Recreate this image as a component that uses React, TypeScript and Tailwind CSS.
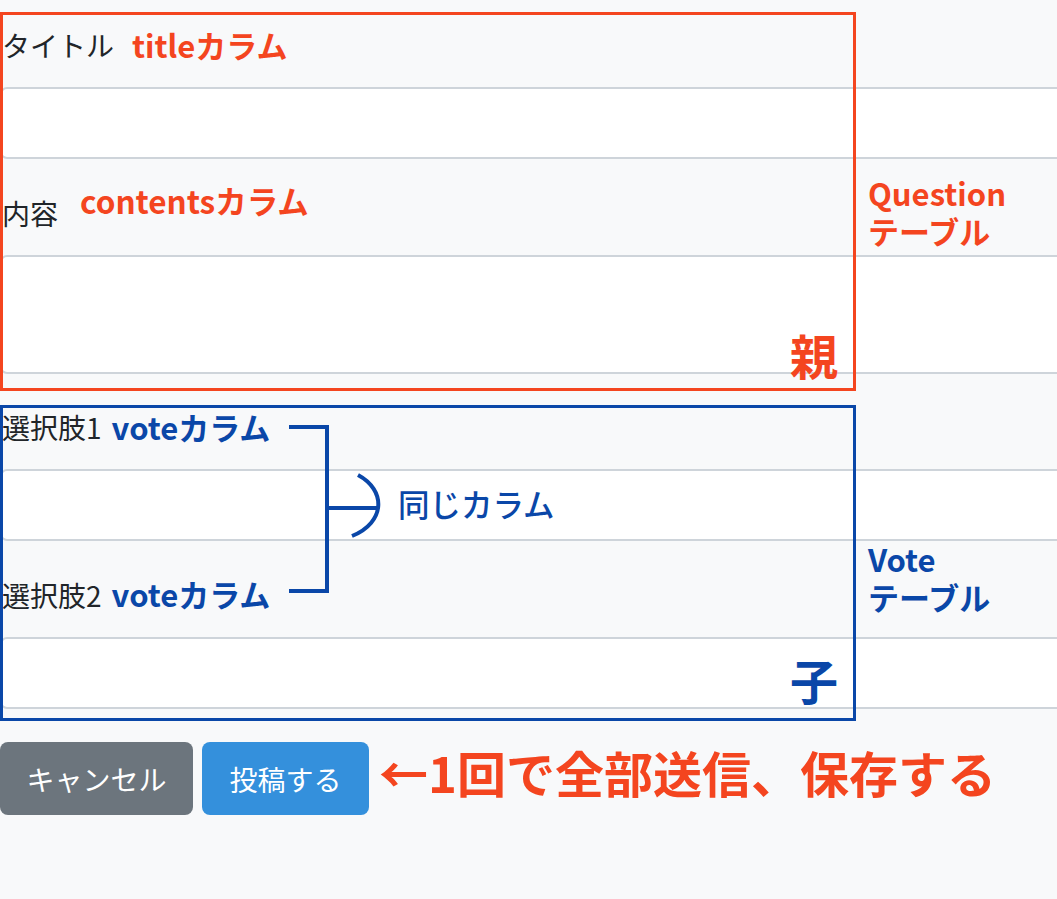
import React from "react";

const RED = "#f4451f";
const BLUE = "#0a47a8";

function Group({
  label,
  note,
  children,
}: {
  label: string;
  note: React.ReactNode;
  children: React.ReactNode;
}) {
  return (
    <div className="mb-[33.5px]">
      <div className="ml-[2px] mb-[22px] flex h-[40px] items-center text-[28px] text-[#212529]">
        <span className="leading-[40px]">{label}</span>
        {note}
      </div>
      {children}
    </div>
  );
}

const inputCls =
  "block h-[72px] w-[1100px] rounded-[7px] border-2 border-[#ced4da] bg-white outline-none";

export default function App() {
  const font = { fontFamily: '"Noto Sans CJK JP", "Noto Sans", sans-serif' };
  return (
    <div
      className="relative w-[1057px] h-[899px] overflow-hidden bg-[#f8f9fa] pt-[25px]"
      style={font}
    >
      <form className="w-[1057px]" onSubmit={(e) => e.preventDefault()}>
        <Group
          label="タイトル"
          note={
            <span className="ml-[18px] mb-[2px] text-[31px] font-bold leading-none text-[#f4451f]">titleカラム</span>
          }
        >
          <input type="text" className={inputCls} />
        </Group>
        <Group
          label="内容"
          note={
            <span className="ml-[22px] mb-[24px] text-[31.5px] font-bold leading-none text-[#f4451f]">contentsカラム</span>
          }
        >
          <textarea className="block h-[119px] w-[1100px] resize-none rounded-[7px] border-2 border-[#ced4da] bg-white outline-none" />
        </Group>
        <Group
          label="選択肢1"
          note={
            <span className="ml-[10px] mb-[2px] text-[31px] font-bold leading-none text-[#0a47a8]">voteカラム</span>
          }
        >
          <input type="text" className={inputCls} />
        </Group>
        <Group
          label="選択肢2"
          note={
            <span className="ml-[10px] mb-[2px] text-[31px] font-bold leading-none text-[#0a47a8]">voteカラム</span>
          }
        >
          <input type="text" className={inputCls} />
        </Group>
        <div className="flex items-center gap-[9px]">
          <button
            type="button"
            className="h-[73px] w-[193px] rounded-[8px] bg-[#6c757d] text-[28px] text-white"
          >
            キャンセル
          </button>
          <button
            type="submit"
            className="h-[73px] w-[167px] rounded-[8px] bg-[#3490dc] text-[28px] text-white"
          >
            投稿する
          </button>
          <span
            className="ml-[1px] mb-[14px] whitespace-nowrap text-[49px] font-bold leading-none"
            style={{ color: RED }}
          >
            ←1回で全部送信、保存する
          </span>
        </div>
      </form>

      {/* annotation overlays */}
      <div className="pointer-events-none absolute left-0 top-[12px] h-[379px] w-[856px] border-[3.5px] border-[#f4451f]" />
      <div className="pointer-events-none absolute left-0 top-[405px] h-[316px] w-[856px] border-[3.5px] border-[#0a47a8]" />

      <div className="absolute left-[868px] top-[174px] flex flex-col text-[31px] font-bold leading-[38px] text-[#f4451f]">
        <span>Question</span>
        <span>テーブル</span>
      </div>
      <div className="absolute left-[790px] top-[330px] text-[48px] font-bold leading-none text-[#f4451f]">親</div>

      <div className="absolute left-[398px] top-[488px] text-[31.5px] font-medium leading-none text-[#0a47a8]">同じカラム</div>
      <div className="absolute left-[868px] top-[540px] flex flex-col text-[31px] font-bold leading-[38px] text-[#0a47a8]">
        <span>Vote</span>
        <span>テーブル</span>
      </div>
      <div className="absolute left-[790px] top-[655px] text-[48px] font-bold leading-none text-[#0a47a8]">子</div>

      <svg className="pointer-events-none absolute left-0 top-0" width="1057" height="899">
        <g fill="none" stroke={BLUE} strokeWidth="4" strokeLinecap="butt">
          <path d="M289 427 H327 V591 H289" />
          <path d="M325 508 H378" />
          <path d="M358 475 C386 490, 386 522, 352 536" />
        </g>
      </svg>
    </div>
  );
}
